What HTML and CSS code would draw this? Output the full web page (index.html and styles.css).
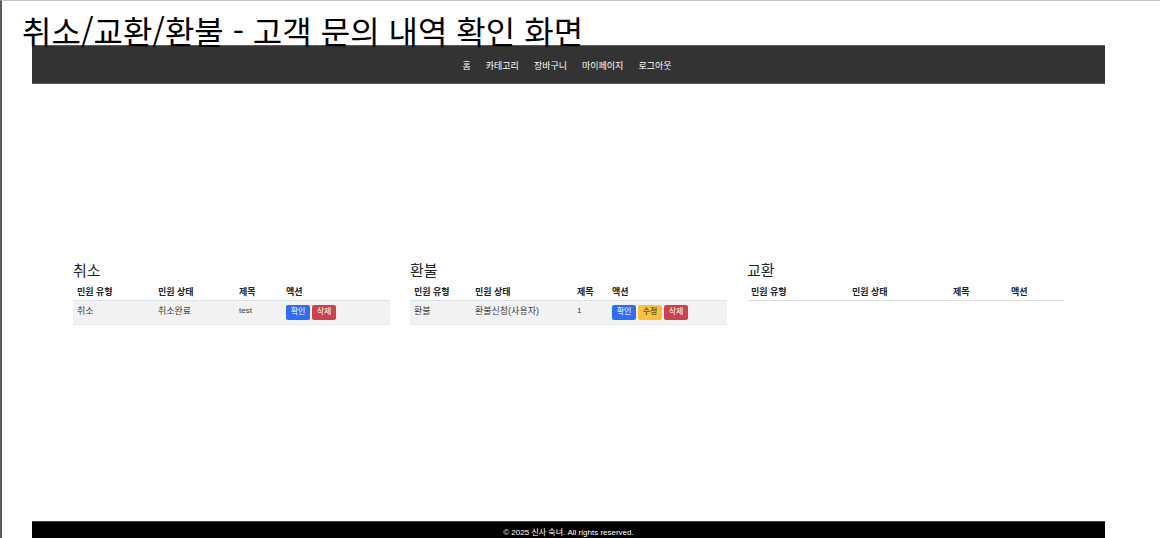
FILE: index.html
```html
<!DOCTYPE html>
<html lang="ko">
<head>
<meta charset="utf-8">
<meta name="viewport" content="width=device-width, initial-scale=1">
<title>고객 문의 내역 확인</title>
<link rel="stylesheet" href="styles.css">
</head>
<body>
<h1 class="slide-title">취소/교환/환불 - 고객 문의 내역 확인 화면</h1>
<div class="screen">
  <nav class="navbar">
    <a href="#">홈</a>
    <a href="#">카테고리</a>
    <a href="#">장바구니</a>
    <a href="#">마이페이지</a>
    <a href="#">로그아웃</a>
  </nav>
  <main class="content">
    <section class="panel">
      <h2>취소</h2>
      <table class="cancel">
        <thead><tr><th class="type">민원 유형</th><th class="state">민원 상태</th><th class="subject">제목</th><th>액션</th></tr></thead>
        <tbody><tr><td>취소</td><td>취소완료</td><td class="latin">test</td><td><div class="actions"><button class="btn view">확인</button><button class="btn delete">삭제</button></div></td></tr></tbody>
      </table>
    </section>
    <section class="panel">
      <h2>환불</h2>
      <table class="refund">
        <thead><tr><th class="type">민원 유형</th><th class="state">민원 상태</th><th class="subject">제목</th><th>액션</th></tr></thead>
        <tbody><tr><td>환불</td><td>환불신청(사용자)</td><td class="latin">1</td><td><div class="actions"><button class="btn view">확인</button><button class="btn edit">수정</button><button class="btn delete">삭제</button></div></td></tr></tbody>
      </table>
    </section>
    <section class="panel">
      <h2>교환</h2>
      <table class="exchange">
        <thead><tr><th class="type">민원 유형</th><th class="state">민원 상태</th><th class="subject">제목</th><th>액션</th></tr></thead>
        <tbody></tbody>
      </table>
    </section>
  </main>
  <footer class="footer">© 2025 신사 숙녀. All rights reserved.</footer>
</div>
</body>
</html>
```
FILE: styles.css
```css
* { box-sizing: border-box; }

body {
  margin: 0;
  height: 100vh;
  display: flex;
  flex-direction: column;
  overflow: hidden;
  background: #fff;
  border-top: 1px solid #c4c4c4;
  border-left: 2px solid #5c5c5c;
  color: #212529;
  font-family: "Liberation Sans", "Noto Sans CJK KR", sans-serif;
  font-size: 9px;
}

.slide-title {
  position: relative;
  z-index: 1;
  margin: 0;
  padding: 7px 0 0 20px;
  height: 44px;
  color: #000;
  font-family: "Noto Sans CJK KR", sans-serif;
  font-size: 32px;
  font-weight: 400;
  line-height: 44px;
  white-space: nowrap;
}

.screen {
  flex: 1;
  display: flex;
  flex-direction: column;
  margin: 0 55px 0 30px;
}

.navbar {
  display: flex;
  justify-content: center;
  align-items: center;
  gap: 15px;
  height: 39px;
  padding: 2px 3px 0 0;
  background: #333;
  border: 1px solid #5a5a5a;
  border-width: 1px 0;
}

.navbar a {
  color: #fff;
  line-height: 12px;
  text-decoration: none;
}

.content {
  flex: 1;
  display: grid;
  grid-template-columns: repeat(3, 1fr);
  gap: 20px;
  align-content: center;
  padding: 0 41px 22px;
}

.panel h2 {
  margin: 0;
  font-size: 15px;
  font-weight: 400;
  line-height: 24px;
}

table {
  width: 100%;
  table-layout: fixed;
  border-collapse: collapse;
}

th, td {
  padding: 4px;
  border-bottom: 1px solid #dee2e6;
  line-height: 12px;
  text-align: left;
  vertical-align: top;
  white-space: nowrap;
}

th { padding: 3px 4px 2px; }
td {
  background: #f2f2f2;
  border-bottom-color: #e8e9ea;
  color: #3a3d40;
}
td.latin { font-size: 8px; }

.cancel .type, .cancel .state { width: 81px; }
.cancel .subject { width: 47px; }
.refund .type { width: 61px; }
.refund .state { width: 102px; }
.refund .subject { width: 35px; }
.exchange .type, .exchange .state { width: 101px; }
.exchange .subject { width: 58px; }

.actions {
  display: flex;
  gap: 2px;
}

.btn {
  min-width: 24px;
  height: 15px;
  padding: 0 4px;
  border: 0;
  border-radius: 2px;
  color: #fff;
  font: inherit;
  font-size: 8px;
  line-height: 12px;
}

.view { background: #2f6df6; }
.edit { background: #f9c23c; color: #212529; }
.delete { background: #cd434d; }

.footer {
  padding: 5px 0 0;
  background: #000;
  border-top: 1px solid #444;
  color: #fff;
  font-size: 8px;
  line-height: 11px;
  text-align: center;
}
```
